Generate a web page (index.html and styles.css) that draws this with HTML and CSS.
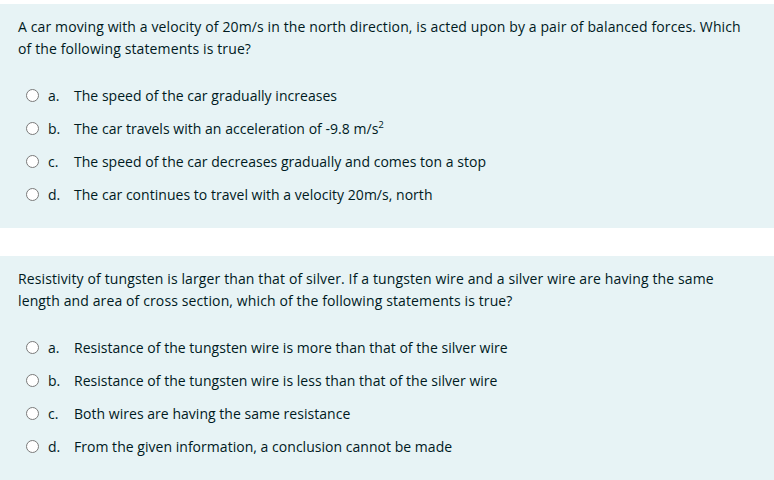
FILE: index.html
```html
<!DOCTYPE html>
<html lang="en">
<head>
<meta charset="utf-8">
<title>Quiz</title>
<link rel="stylesheet" href="styles.css">
</head>
<body>
<div class="page">
  <div class="que">
    <div class="qtext">A car moving with a velocity of 20m/s in the north direction, is acted upon by a pair of balanced forces. Which of the following statements is true?</div>
    <div class="answer">
      <div class="opt"><span class="radio"></span><span class="letter">a.</span><span class="label">The speed of the car gradually increases</span></div>
      <div class="opt"><span class="radio"></span><span class="letter">b.</span><span class="label">The car travels with an acceleration of -9.8 m/s<sup>2</sup></span></div>
      <div class="opt"><span class="radio"></span><span class="letter">c.</span><span class="label">The speed of the car decreases gradually and comes ton a stop</span></div>
      <div class="opt"><span class="radio"></span><span class="letter">d.</span><span class="label">The car continues to travel with a velocity 20m/s, north</span></div>
    </div>
  </div>
  <div class="que">
    <div class="qtext">Resistivity of tungsten is larger than that of silver. If a tungsten wire and a silver wire are having the same length and area of cross section, which of the following statements is true?</div>
    <div class="answer">
      <div class="opt"><span class="radio"></span><span class="letter">a.</span><span class="label">Resistance of the tungsten wire is more than that of the silver wire</span></div>
      <div class="opt"><span class="radio"></span><span class="letter">b.</span><span class="label">Resistance of the tungsten wire is less than that of the silver wire</span></div>
      <div class="opt"><span class="radio"></span><span class="letter">c.</span><span class="label">Both wires are having the same resistance</span></div>
      <div class="opt"><span class="radio"></span><span class="letter">d.</span><span class="label">From the given information, a conclusion cannot be made</span></div>
    </div>
  </div>
</div>
</body>
</html>
```
FILE: styles.css
```css
html, body {
  margin: 0;
  background: #ffffff;
}
body {
  font-family: "Open Sans", "Noto Sans", "Liberation Sans", sans-serif;
  font-size: 14px;
  color: #001a1e;
}
.page {
  padding-top: 4px;
  display: flex;
  flex-direction: column;
  gap: 28px;
}
.que {
  background: #e7f3f5;
  padding: 12px 22px 17.5px 18px;
}
.qtext {
  font-size: 14px;
  letter-spacing: 0.12px;
  line-height: 22px;
}
.answer {
  margin-top: 18.5px;
  font-size: 14px;
  letter-spacing: 0.03px;
}
.opt {
  height: 33px;
  display: flex;
  align-items: center;
}
.radio {
  flex: none;
  width: 13px;
  height: 13px;
  box-sizing: border-box;
  border: 1px solid #7a7a7a;
  border-radius: 50%;
  background: #ffffff;
  margin-left: 8px;
}
.letter {
  flex: none;
  width: 26px;
  margin-left: 9px;
}
.label sup {
  font-size: 70%;
  line-height: 0;
}
```
